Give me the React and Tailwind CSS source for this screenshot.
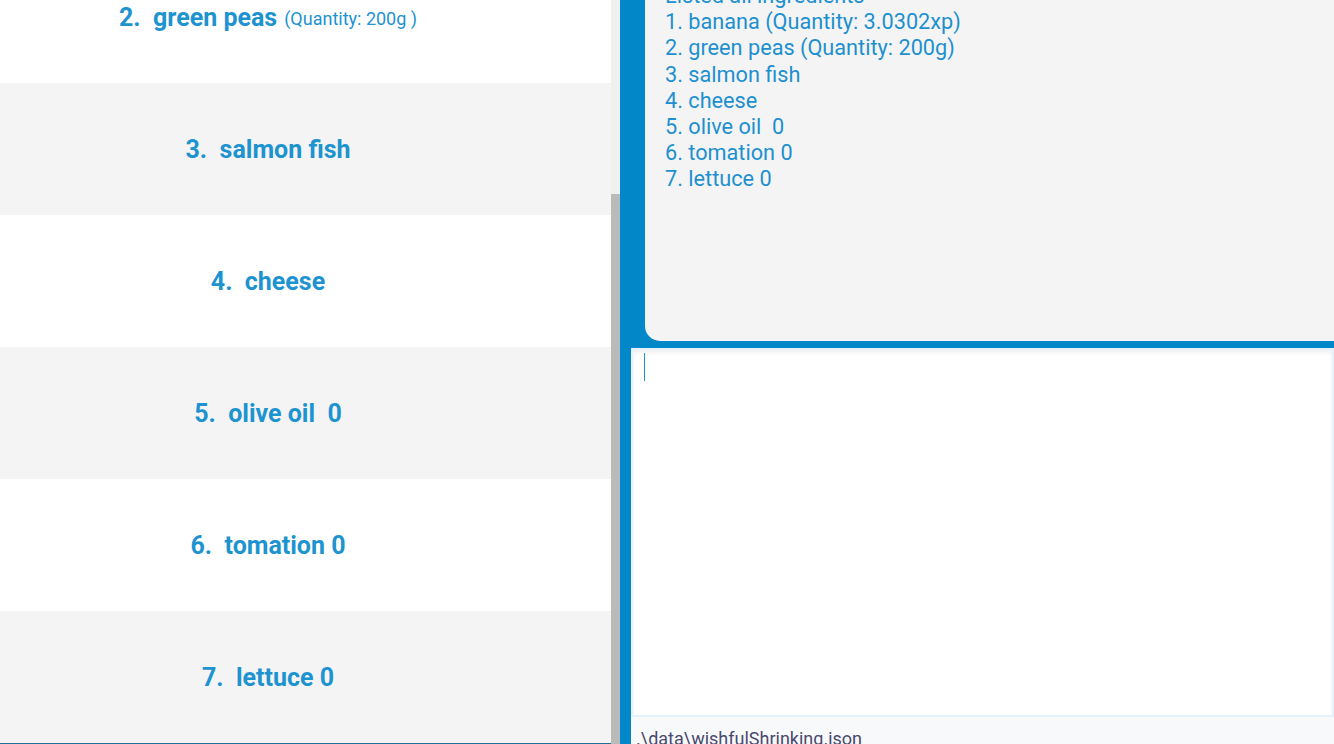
import React from 'react';

const items = [
  { n: 2, name: 'green peas', qty: '(Quantity: 200g )' },
  { n: 3, name: 'salmon fish' },
  { n: 4, name: 'cheese' },
  { n: 5, name: 'olive oil  0' },
  { n: 6, name: 'tomation 0' },
  { n: 7, name: 'lettuce 0' },
];

const resultLines = [
  'Listed all ingredients',
  '1. banana (Quantity: 3.0302xp)',
  '2. green peas (Quantity: 200g)',
  '3. salmon fish',
  '4. cheese',
  '5. olive oil  0',
  '6. tomation 0',
  '7. lettuce 0',
];

function IngredientRow({ item, index }) {
  return (
    <div
      className={`h-[132px] flex items-center justify-center pr-[75px] pt-[2px] ${
        index % 2 === 0 ? 'bg-white' : 'bg-[#f4f4f4]'
      }`}
    >
      <span className="text-[25px] font-bold text-[#1d93d0] whitespace-pre">
        {item.n}.{'  '}{item.name}
      </span>
      {item.qty && (
        <span className="text-[18px] text-[#1d93d0] ml-[7px] mt-[1px]">{item.qty}</span>
      )}
    </div>
  );
}

export default function App() {
  return (
    <div
      className="w-[1334px] h-[744px] overflow-hidden flex bg-white"
      style={{ fontFamily: 'Roboto, "Liberation Sans", sans-serif' }}
    >
      {/* Ingredient list */}
      <div className="w-[611px] h-full flex flex-col">
        <div className="flex-1 overflow-hidden">
          <div className="-mt-[49px]">
            {items.map((item, i) => (
              <IngredientRow key={item.n} item={item} index={i} />
            ))}
          </div>
        </div>
        <div className="h-px bg-[#1f6f95]" />
      </div>

      {/* Scrollbar */}
      <div className="w-[9px] h-full flex flex-col bg-[#f0f0f0]">
        <div className="h-[194px]" />
        <div className="flex-1 bg-[#bababa]" />
      </div>

      {/* Right side */}
      <div className="flex-1 h-full bg-[#0288c8] flex flex-col">
        <div className="ml-[25px] h-[341px] shrink-0 bg-[#f4f4f4] rounded-bl-[15px] overflow-hidden pl-[20px]">
          <div className="-mt-[17px] text-[21.7px] leading-[26.2px] text-[#1d90d0] whitespace-pre">
            {resultLines.map((line) => (
              <div key={line}>{line}</div>
            ))}
          </div>
        </div>
        <div className="h-[7px] shrink-0" />
        <div className="ml-[11px] flex-1 flex flex-col min-h-0">
          <div className="h-[369px] shrink-0 bg-white border-2 border-[#e4f3fb] shadow-[inset_0_3px_4px_rgba(0,0,0,0.06)] pl-[11px] pt-[3px]">
            <div className="w-px h-[28px] bg-[#1d90d0]" />
          </div>
          <div className="flex-1 min-h-0 overflow-hidden bg-[#f8f9fb] pl-[5px] pt-[8px]">
            <span className="text-[18px] leading-[27px] text-[#4a4a6e] whitespace-pre">.\data\wishfulShrinking.json</span>
          </div>
        </div>
      </div>
    </div>
  );
}
